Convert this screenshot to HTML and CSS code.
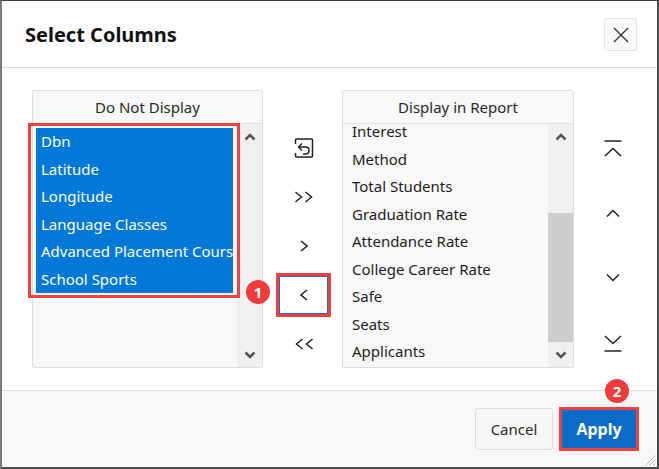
FILE: index.html
```html
<!DOCTYPE html>
<html lang="en">
<head>
<meta charset="utf-8">
<title>Select Columns</title>
<link rel="stylesheet" href="styles.css">
</head>
<body>
<div class="dialog">
  <header class="dlg-header">
    <h1 class="dlg-title">Select Columns</h1>
    <button class="close-btn" aria-label="Close">
      <svg width="18" height="18" viewBox="0 0 18 18"><path d="M2 2 L16 16 M16 2 L2 16" stroke="#333" stroke-width="1.4" fill="none"/></svg>
    </button>
  </header>

  <div class="dlg-body">
    <section class="panel">
      <div class="panel-head">Do Not Display</div>
      <div class="panel-list">
        <div class="list-items">
          <div class="item sel">Dbn</div>
          <div class="item sel">Latitude</div>
          <div class="item sel">Longitude</div>
          <div class="item sel">Language Classes</div>
          <div class="item sel">Advanced Placement Courses</div>
          <div class="item sel">School Sports</div>
        </div>
        <div class="scrollbar">
          <span class="sb-arrow"><svg width="12" height="8" viewBox="0 0 12 8"><path d="M1.5 6.5 L6 2 L10.5 6.5" stroke="#555" stroke-width="2.5" fill="none"/></svg></span>
          <span class="sb-track"></span>
          <span class="sb-arrow"><svg width="12" height="8" viewBox="0 0 12 8"><path d="M1.5 1.5 L6 6 L10.5 1.5" stroke="#555" stroke-width="2.5" fill="none"/></svg></span>
        </div>
      </div>
      <div class="annot-box"></div>
      <span class="badge badge-1">1</span>
    </section>

    <div class="move-col">
      <button class="icon-btn" aria-label="Reset">
        <svg width="20" height="20" viewBox="0 0 20 20" fill="none" stroke="#222" stroke-width="1.5">
          <path d="M1.5 6 V2 Q1.5 1 2.5 1 H17.5 Q18.5 1 18.5 2 V18 Q18.5 19 17.5 19 H2.5 Q1.5 19 1.5 18 V15"/>
          <path d="M8 5.5 L4.5 9 L8 12.5"/>
          <path d="M4.5 9 H11.5 Q15 9 15 12.5 Q15 16 11.5 16 H9"/>
        </svg>
      </button>
      <button class="icon-btn" aria-label="Move all right">
        <svg width="20" height="12" viewBox="0 0 20 12" fill="none" stroke="#222" stroke-width="1.5"><path d="M1.5 1 L7.5 6 L1.5 11"/><path d="M11.5 1 L17.5 6 L11.5 11"/></svg>
      </button>
      <button class="icon-btn" aria-label="Move right">
        <svg width="8" height="12" viewBox="0 0 8 12" fill="none" stroke="#222" stroke-width="1.5"><path d="M1 1 L7 6 L1 11"/></svg>
      </button>
      <button class="icon-btn focused" aria-label="Move left">
        <svg width="8" height="12" viewBox="0 0 8 12" fill="none" stroke="#222" stroke-width="1.5"><path d="M7 1 L1 6 L7 11"/></svg>
      </button>
      <button class="icon-btn" aria-label="Move all left">
        <svg width="20" height="12" viewBox="0 0 20 12" fill="none" stroke="#222" stroke-width="1.5"><path d="M8.5 1 L2.5 6 L8.5 11"/><path d="M18.5 1 L12.5 6 L18.5 11"/></svg>
      </button>
    </div>

    <section class="panel">
      <div class="panel-head">Display in Report</div>
      <div class="panel-list">
        <div class="list-items scrolled">
          <div class="item">Interest</div>
          <div class="item">Method</div>
          <div class="item">Total Students</div>
          <div class="item">Graduation Rate</div>
          <div class="item">Attendance Rate</div>
          <div class="item">College Career Rate</div>
          <div class="item">Safe</div>
          <div class="item">Seats</div>
          <div class="item">Applicants</div>
        </div>
        <div class="scrollbar">
          <span class="sb-arrow"><svg width="12" height="8" viewBox="0 0 12 8"><path d="M1.5 6.5 L6 2 L10.5 6.5" stroke="#555" stroke-width="2.5" fill="none"/></svg></span>
          <span class="sb-track"><span class="sb-thumb"></span></span>
          <span class="sb-arrow"><svg width="12" height="8" viewBox="0 0 12 8"><path d="M1.5 1.5 L6 6 L10.5 1.5" stroke="#555" stroke-width="2.5" fill="none"/></svg></span>
        </div>
      </div>
    </section>

    <div class="order-col">
      <button class="icon-btn" aria-label="Move to top">
        <svg width="18" height="17" viewBox="0 0 18 17" fill="none" stroke="#222" stroke-width="1.5"><path d="M0.5 1 H17.5"/><path d="M1 16 L9 8.5 L17 16"/></svg>
      </button>
      <button class="icon-btn" aria-label="Move up">
        <svg width="14" height="8" viewBox="0 0 14 8" fill="none" stroke="#222" stroke-width="1.5"><path d="M1 7.5 L7 1.5 L13 7.5"/></svg>
      </button>
      <button class="icon-btn" aria-label="Move down">
        <svg width="14" height="8" viewBox="0 0 14 8" fill="none" stroke="#222" stroke-width="1.5"><path d="M1 0.5 L7 6.5 L13 0.5"/></svg>
      </button>
      <button class="icon-btn" aria-label="Move to bottom">
        <svg width="18" height="17" viewBox="0 0 18 17" fill="none" stroke="#222" stroke-width="1.5"><path d="M1 1 L9 8.5 L17 1"/><path d="M0.5 16 H17.5"/></svg>
      </button>
    </div>
  </div>

  <footer class="dlg-footer">
    <button class="btn btn-cancel">Cancel</button>
    <div class="apply-wrap">
      <button class="btn btn-apply">Apply</button>
      <span class="badge badge-2">2</span>
    </div>
    <svg class="grip" width="12" height="12" viewBox="0 0 12 12" stroke="#b5b5b5" stroke-width="1"><path d="M11.5 1.5 L1.5 11.5 M11.5 5.5 L5.5 11.5 M11.5 9.5 L9.5 11.5"/></svg>
  </footer>
</div>
</body>
</html>
```

FILE: styles.css
```css
* { box-sizing: border-box; }

html, body {
  margin: 0;
  padding: 0;
  background: #ffffff;
}

body {
  font-family: "Noto Sans", "Open Sans", "DejaVu Sans", sans-serif;
  color: #222;
}

button {
  font-family: inherit;
  cursor: pointer;
}

.dialog {
  width: 659px;
  height: 469px;
  display: flex;
  flex-direction: column;
  border-top: 1px solid #3f3f3f;
  border-right: 2px solid #4a4a4a;
  border-bottom: 2px solid #4a4a4a;
  border-left: 2px solid #7a7a7a;
  background: #fff;
  position: relative;
}

/* Header */
.dlg-header {
  height: 67px;
  flex: none;
  display: flex;
  align-items: center;
  justify-content: space-between;
  padding: 0 20px 0 23px;
  border-bottom: 1px solid #dedede;
}

.dlg-title {
  margin: 0;
  font-size: 20px;
  font-weight: 700;
  color: #111;
}

.close-btn {
  width: 33px;
  height: 33px;
  padding: 0;
  border: 1px solid #e3e3e3;
  border-radius: 3px;
  background: #f9f9f9;
  display: flex;
  align-items: center;
  justify-content: center;
  margin-top: 1px;
}

/* Body */
.dlg-body {
  flex: 1;
  display: grid;
  grid-template-columns: 231px 79px 232px 1fr;
  align-items: start;
  padding: 22px 0 0 30px;
}

.panel {
  height: 278px;
  border: 1px solid #dedede;
  border-radius: 2px;
  background: #f8f8f8;
  display: flex;
  flex-direction: column;
  position: relative;
}

.panel-head {
  height: 33px;
  flex: none;
  display: flex;
  align-items: center;
  justify-content: center;
  font-size: 15px;
  color: #2a2a2a;
  border-bottom: 1px solid #e0e0e0;
}

.panel-list {
  flex: 1;
  display: flex;
  min-height: 0;
}

.list-items {
  flex: 1;
  overflow: hidden;
  padding: 4px 4px 0 3px;
  min-width: 0;
}

.list-items.scrolled {
  padding-top: 0;
  margin-top: -6px;
}

.item {
  height: 27.5px;
  line-height: 27.5px;
  padding-left: 6px;
  font-size: 15px;
  color: #1e1e1e;
  white-space: nowrap;
  overflow: hidden;
}

.item.sel {
  background: #0078d7;
  color: #fff;
  padding-left: 5px;
}

.scrollbar {
  width: 25px;
  flex: none;
  background: #f0f0f0;
  display: flex;
  flex-direction: column;
}

.sb-arrow {
  height: 25px;
  flex: none;
  display: flex;
  align-items: center;
  justify-content: center;
}

.sb-track {
  flex: 1;
  display: flex;
  flex-direction: column;
  justify-content: flex-end;
}

.sb-thumb {
  display: block;
  height: 129px;
  background: #cdcdcd;
}

/* Annotations */
.annot-box {
  position: absolute;
  left: -5px;
  top: 32px;
  width: 212px;
  height: 175px;
  border: 3px solid #f0403f;
  pointer-events: none;
}

.badge {
  position: absolute;
  width: 24px;
  height: 24px;
  border-radius: 50%;
  background: #ee3b3b;
  color: #fff;
  font-size: 15px;
  font-weight: 700;
  display: flex;
  align-items: center;
  justify-content: center;
  line-height: 1;
}

.badge-1 {
  left: 213px;
  top: 189px;
}

/* Move / order columns */
.move-col,
.order-col {
  display: flex;
  flex-direction: column;
  align-items: center;
  padding-top: 36px;
}

.move-col { gap: 5px; padding-left: 2px; }
.order-col { gap: 21px; padding-right: 5px; }

.icon-btn {
  width: 55px;
  height: 44px;
  padding: 0;
  border: 3px solid transparent;
  background: transparent;
  display: flex;
  align-items: center;
  justify-content: center;
}

.icon-btn.focused {
  border-color: #f0403f;
  background: #fff;
  box-shadow: inset 0 0 0 1px #1a6fd0;
}

/* Footer */
.dlg-footer {
  height: 77px;
  flex: none;
  display: flex;
  align-items: center;
  justify-content: flex-end;
  gap: 6px;
  padding: 0 18px 0 0;
  background: #f8f8f8;
  border-top: 1px solid #dedede;
  position: relative;
}

.btn {
  font-size: 15px;
  border-radius: 3px;
}

.btn-cancel {
  width: 78px;
  height: 42px;
  border: 1px solid #dcdcdc;
  background: #f7f7f7;
  color: #2b2b2b;
}

.apply-wrap {
  position: relative;
}

.btn-apply {
  width: 80px;
  height: 44px;
  display: block;
  border: 3px solid #f0403f;
  border-radius: 0;
  background: #0a6cc6;
  color: #fff;
  font-weight: 700;
  font-size: 16px;
}

.badge-2 {
  left: 46px;
  top: -28px;
}

.grip {
  position: absolute;
  right: 1px;
  bottom: 1px;
}
```
